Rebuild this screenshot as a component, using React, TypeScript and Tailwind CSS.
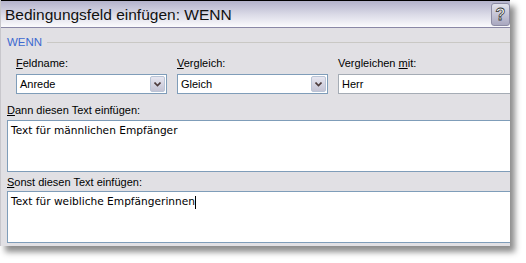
import React from 'react';

function Combo({ value, width }: { value: string; width: string }) {
  return (
    <div className={`flex h-[20px] ${width} border border-[#7f9db9] bg-white`}>
      <div className="flex-1 pl-[3px] leading-[18px]">{value}</div>
      <div className="m-px flex w-[15px] items-center justify-center rounded-[2px] border border-[#b9c4d6] bg-gradient-to-b from-[#e6e6f0] to-[#c4c3d4]">
        <svg width="7" height="5" viewBox="0 0 7 5">
          <path d="M0.5 0.5 L3.5 3.5 L6.5 0.5" fill="none" stroke="#4d3b3b" strokeWidth="1.6" />
        </svg>
      </div>
    </div>
  );
}

export default function App() {
  return (
    <div className="w-[526px] h-[263px] bg-white overflow-hidden font-['Liberation_Sans',sans-serif] text-[11px] text-black">
      <div className="w-[510px] h-[246px] bg-[#e1e0e4] shadow-[5px_6px_6px_rgba(0,0,0,0.45)] overflow-hidden flex flex-col border-l border-[#c8c7cc]">
        {/* Title bar */}
        <div className="h-[28px] shrink-0 flex items-center justify-between border-t border-black border-b border-b-[#8a88a6] bg-gradient-to-b from-[#b3b2cb] via-[#d9d9e6] to-[#fbfbfd] pl-[4px]">
          <span className="text-[15.5px] text-[#111] pt-[1px]">Bedingungsfeld einfügen: WENN</span>
          <div className="w-[19px] h-[23px] mt-[1px] rounded-[3px] border border-[#8d8ca4] bg-gradient-to-b from-[#e2e2ec] to-[#a9a8c0] flex items-center justify-center font-bold text-[16px] text-white [-webkit-text-stroke:0.8px_#333]">
            ?
          </div>
        </div>

        {/* Body */}
        <div className="flex flex-col pl-[6px] pt-[8px]">
          <div className="flex items-center">
            <span className="text-[#3d6ad0] leading-[12px] text-[11.5px]">WENN</span>
            <div className="flex-1 h-px bg-[#c9c8c4] ml-[5px]" />
          </div>

          <div className="flex gap-[10px] pl-[9px] mt-[9px]">
            <div className="flex flex-col">
              <span className="leading-[13px] mb-[4px]"><u>F</u>eldname:</span>
              <Combo value="Anrede" width="w-[151px]" />
            </div>
            <div className="flex flex-col">
              <span className="leading-[13px] mb-[4px]"><u>V</u>ergleich:</span>
              <Combo value="Gleich" width="w-[151px]" />
            </div>
            <div className="flex flex-col">
              <span className="leading-[13px] mb-[4px]">Vergleichen <u>m</u>it:</span>
              <div className="h-[20px] w-[200px] border border-[#a5acb5] bg-white pl-[3px] leading-[18px]">Herr</div>
            </div>
          </div>

          <span className="mt-[10px] leading-[13px]"><u>D</u>ann diesen Text einfügen:</span>
          <div className="mt-[3px] h-[52px] w-[520px] border border-[#7f9db9] bg-white pl-[3px] pt-[2px] font-['DejaVu_Sans',sans-serif] text-[10.6px] leading-[14px]">
            Text für männlichen Empfänger
          </div>

          <span className="mt-[4px] leading-[13px]"><u>S</u>onst diesen Text einfügen:</span>
          <div className="mt-[2px] h-[52px] w-[520px] border border-[#7f9db9] bg-white pl-[3px] pt-[2px] font-['DejaVu_Sans',sans-serif] text-[10.6px] leading-[14px]">
            Text für weibliche Empfängerinnen<span className="inline-block w-px h-[13px] bg-black align-middle" />
          </div>
        </div>
      </div>
    </div>
  );
}
